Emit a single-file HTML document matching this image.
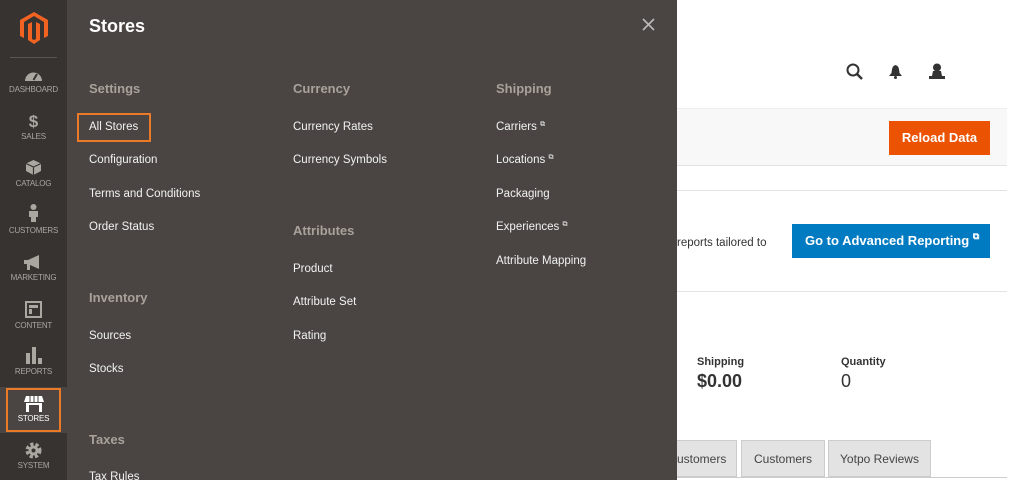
<!DOCTYPE html>
<html><head><style>
*{margin:0;padding:0;box-sizing:border-box}
body{width:1024px;height:480px;overflow:hidden;background:#fff;font-family:"Liberation Sans",sans-serif;position:relative}
.a{position:absolute;white-space:nowrap}
#side{left:0;top:0;width:67px;height:480px;background:#373330}
.lbl{width:67px;text-align:center;font-size:8px;color:#aaa6a0;letter-spacing:-.2px}
.ic{width:67px;text-align:center;color:#aaa6a0}
#panel{left:67px;top:0;width:610px;height:480px;background:#4a4542}
.h{font-size:13px;color:#a9a19a;font-weight:bold}
.it{font-size:11.5px;color:#f2f2f2}
</style></head><body>
<div id="side" class="a">
<svg class="a" style="left:20px;top:12px" width="28" height="32" viewBox="0 0 28 32"><path d="M14 0L28 8V24L24 26V10L14 4 4 10V26L0 24V8Z M16 10L20 12V28L14 32 8 28V12L12 10V27L14 28 16 27Z" fill="#f26322"/></svg>
<div class="a" style="left:10px;top:57px;width:47px;height:1px;background:#5a5550"></div>
<svg class="a" style="left:24px;top:68px" width="19" height="14" viewBox="0 0 19 14"><path d="M1 13A8.5 8.5 0 0 1 18 13Z" fill="#aaa6a0"/><path d="M9.5 12L13 6" stroke="#373330" stroke-width="2"/></svg>
<div class="a lbl" style="top:85px">DASHBOARD</div>
<div class="a ic" style="top:112px;font-size:17px;font-weight:bold">$</div>
<div class="a lbl" style="top:132px">SALES</div>
<svg class="a" style="left:26px;top:160px" width="15" height="15" viewBox="0 0 15 15"><path d="M7.5 0L15 3.5V11L7.5 15 0 11V3.5Z" fill="#aaa6a0"/><path d="M0 3.5L7.5 7 15 3.5M7.5 7V15" stroke="#373330" stroke-width="1.2" fill="none"/></svg>
<div class="a lbl" style="top:179px">CATALOG</div>
<svg class="a" style="left:28px;top:204px" width="11" height="18" viewBox="0 0 11 18"><circle cx="5.5" cy="3" r="3" fill="#aaa6a0"/><path d="M1 7H10V13H8V18H3V13H1Z" fill="#aaa6a0"/></svg>
<div class="a lbl" style="top:226px">CUSTOMERS</div>
<svg class="a" style="left:24px;top:255px" width="19" height="15" viewBox="0 0 19 15"><path d="M0 5H4L15 0V14L4 9H0ZM3 9H6V15H3Z" fill="#aaa6a0"/></svg>
<div class="a lbl" style="top:273px">MARKETING</div>
<svg class="a" style="left:25px;top:301px" width="17" height="17" viewBox="0 0 17 17"><rect x="1" y="1" width="15" height="15" fill="none" stroke="#aaa6a0" stroke-width="2"/><rect x="4" y="4" width="9" height="3" fill="#aaa6a0"/><rect x="4" y="8" width="3" height="5" fill="#aaa6a0"/></svg>
<div class="a lbl" style="top:321px">CONTENT</div>
<svg class="a" style="left:26px;top:347px" width="16" height="17" viewBox="0 0 16 17"><rect x="0" y="6" width="4" height="11" fill="#aaa6a0"/><rect x="6" y="0" width="4" height="17" fill="#aaa6a0"/><rect x="12" y="11" width="4" height="6" fill="#aaa6a0"/></svg>
<div class="a lbl" style="top:367px">REPORTS</div>
<div class="a" style="left:0;top:387px;width:67px;height:46px;background:#4a4542"></div>
<div class="a" style="left:6px;top:388px;width:55px;height:44px;border:2px solid #eb7a26"></div>
<svg class="a" style="left:24px;top:396px" width="20" height="16" viewBox="0 0 20 16"><path d="M2 0H18L20 6H0Z" fill="#fff"/><path d="M2 7H18V16H2Z" fill="#fff"/><path d="M6 0V6M10 0V6M14 0V6" stroke="#4a4542" stroke-width="1"/><rect x="5" y="9" width="10" height="7" fill="#4a4542"/></svg>
<div class="a lbl" style="top:414px;color:#fff">STORES</div>
<svg class="a" style="left:25px;top:442px" width="17" height="17" viewBox="0 0 17 17"><circle cx="8.5" cy="8.5" r="6" fill="none" stroke="#aaa6a0" stroke-width="4" stroke-dasharray="3 2"/><circle cx="8.5" cy="8.5" r="5" fill="#aaa6a0"/><circle cx="8.5" cy="8.5" r="2" fill="#373330"/></svg>
<div class="a lbl" style="top:461px">SYSTEM</div>
</div>

<div id="panel" class="a">
<div class="a" style="left:22px;top:16px;font-size:18px;font-weight:bold;color:#fff">Stores</div>
<svg class="a" style="left:575px;top:18px" width="13" height="13" viewBox="0 0 13 13"><path d="M1 1L12 12M12 1L1 12" stroke="#bbb" stroke-width="1.6"/></svg>
<div class="a h" style="left:22px;top:81px">Settings</div>
<div class="a" style="left:10px;top:113px;width:74px;height:29px;border:2px solid #eb7a26"></div>
<div class="a it" style="left:22px;top:121px">All Stores</div>
<div class="a it" style="left:22px;top:154px">Configuration</div>
<div class="a it" style="left:22px;top:188px">Terms and Conditions</div>
<div class="a it" style="left:22px;top:221px">Order Status</div>
<div class="a h" style="left:22px;top:290px">Inventory</div>
<div class="a it" style="left:22px;top:330px">Sources</div>
<div class="a it" style="left:22px;top:363px">Stocks</div>
<div class="a h" style="left:22px;top:432px">Taxes</div>
<div class="a it" style="left:22px;top:471px">Tax Rules</div>
<div class="a h" style="left:226px;top:81px">Currency</div>
<div class="a it" style="left:226px;top:121px">Currency Rates</div>
<div class="a it" style="left:226px;top:154px">Currency Symbols</div>
<div class="a h" style="left:226px;top:223px">Attributes</div>
<div class="a it" style="left:226px;top:263px">Product</div>
<div class="a it" style="left:226px;top:296px">Attribute Set</div>
<div class="a it" style="left:226px;top:330px">Rating</div>
<div class="a h" style="left:429px;top:81px">Shipping</div>
<div class="a it" style="left:429px;top:121px">Carriers <span style="font-size:7px;vertical-align:top">⧉</span></div>
<div class="a it" style="left:429px;top:154px">Locations <span style="font-size:7px;vertical-align:top">⧉</span></div>
<div class="a it" style="left:429px;top:188px">Packaging</div>
<div class="a it" style="left:429px;top:221px">Experiences <span style="font-size:7px;vertical-align:top">⧉</span></div>
<div class="a it" style="left:429px;top:255px">Attribute Mapping</div>
</div>

<svg class="a" style="left:846px;top:63px" width="18" height="18" viewBox="0 0 18 18"><circle cx="7" cy="7" r="5.5" fill="none" stroke="#333" stroke-width="2"/><path d="M11 11L16 16" stroke="#333" stroke-width="2.5"/></svg>
<svg class="a" style="left:889px;top:65px" width="13" height="14" viewBox="0 0 13 14"><path d="M6.5 0C3 1 3 4 2.5 8L0 11H13L10.5 8C10 4 10 1 6.5 0Z" fill="#333"/><circle cx="6.5" cy="12.5" r="1.5" fill="#333"/></svg>
<svg class="a" style="left:929px;top:63px" width="16" height="16" viewBox="0 0 16 16"><circle cx="8" cy="4.5" r="4" fill="#333"/><path d="M4 8H12L13 13H16V16H0V13H3Z" fill="#333"/></svg>
<div class="a" style="left:677px;top:108px;width:330px;height:58px;background:#f8f8f8;border-top:1px solid #eee;border-bottom:1px solid #e3e3e3"></div>
<div class="a" style="left:889px;top:121px;width:101px;height:34px;background:#eb5202;color:#fff;font-size:13px;font-weight:bold;text-align:center;line-height:34px">Reload Data</div>
<div class="a" style="left:677px;top:190px;width:330px;height:1px;background:#e3e3e3"></div>
<div class="a" style="left:677px;top:237px;font-size:11.5px;color:#333">reports tailored to</div>
<div class="a" style="left:792px;top:224px;width:198px;height:34px;background:#007bc2;color:#fff;font-size:13px;font-weight:bold;line-height:34px;padding-left:13px">Go to Advanced Reporting <span style="font-size:9px;vertical-align:top;line-height:24px">⧉</span></div>
<div class="a" style="left:677px;top:291px;width:330px;height:1px;background:#e3e3e3"></div>
<div class="a" style="left:697px;top:356px;font-size:11px;font-weight:bold;color:#333">Shipping</div>
<div class="a" style="left:697px;top:371px;font-size:18px;font-weight:bold;color:#333">$0.00</div>
<div class="a" style="left:841px;top:356px;font-size:11px;font-weight:bold;color:#333">Quantity</div>
<div class="a" style="left:841px;top:371px;font-size:18px;color:#333">0</div>
<div class="a" style="left:677px;top:440px;width:60px;height:37px;background:#e3e3e3;border:1px solid #ccc;border-left:none;font-size:12px;color:#444;line-height:36px">ustomers</div>
<div class="a" style="left:741px;top:440px;width:84px;height:37px;background:#e3e3e3;border:1px solid #ccc;font-size:12px;color:#444;line-height:36px;text-align:center">Customers</div>
<div class="a" style="left:828px;top:440px;width:103px;height:37px;background:#e3e3e3;border:1px solid #ccc;font-size:12px;color:#444;line-height:36px;text-align:center">Yotpo Reviews</div>
<div class="a" style="left:677px;top:477px;width:330px;height:1px;background:#ccc"></div>
</body></html>
